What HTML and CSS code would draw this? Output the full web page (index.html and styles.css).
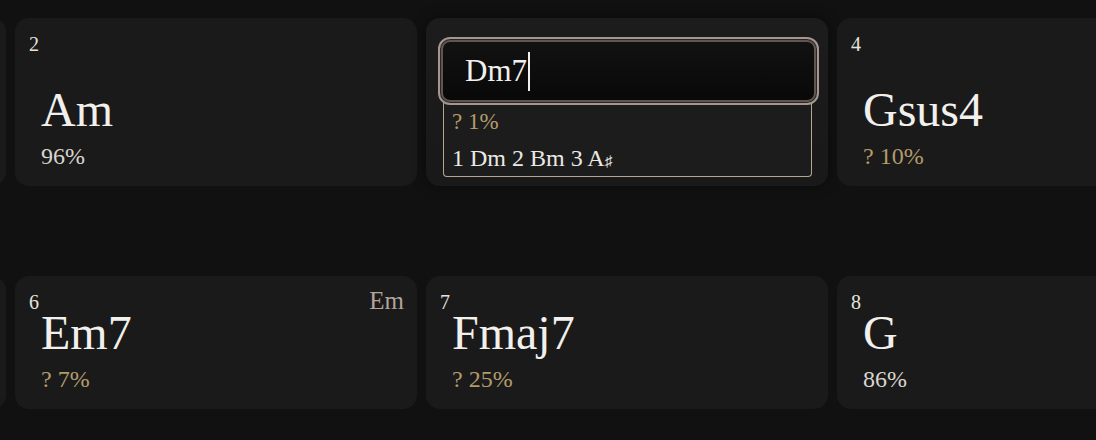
FILE: index.html
```html
<!DOCTYPE html>
<html lang="en">

<head>
    <meta charset="UTF-8">
    <meta name="viewport" content="width=device-width, initial-scale=1.0">
    <title>Chord Sheet</title>
    <link rel="stylesheet" href="styles.css">
</head>

<body>
    <div class="board">
        <!-- row 1 -->
        <div class="card"></div>
        <div class="card">
            <span class="num">2</span>
            <div class="chord">
                <div class="name">Am</div>
                <div class="conf">96%</div>
            </div>
        </div>
        <div class="card editing">
            <div class="chord-input">
                <span class="typed">Dm7</span><span class="caret"></span>
            </div>
            <div class="suggest">
                <div class="conf unsure">? 1%</div>
                <div class="options">1 Dm 2 Bm 3 A<span class="sharp">♯</span></div>
            </div>
        </div>
        <div class="card">
            <span class="num">4</span>
            <div class="chord">
                <div class="name">Gsus4</div>
                <div class="conf unsure">? 10%</div>
            </div>
        </div>

        <!-- row 2 -->
        <div class="card"></div>
        <div class="card">
            <span class="num">6</span>
            <span class="alt">Em</span>
            <div class="chord">
                <div class="name">Em7</div>
                <div class="conf unsure">? 7%</div>
            </div>
        </div>
        <div class="card">
            <span class="num">7</span>
            <div class="chord">
                <div class="name">Fmaj7</div>
                <div class="conf unsure">? 25%</div>
            </div>
        </div>
        <div class="card">
            <span class="num">8</span>
            <div class="chord">
                <div class="name">G</div>
                <div class="conf">86%</div>
            </div>
        </div>
    </div>
</body>

</html>
```

FILE: styles.css
```css
html,
body {
    overflow: hidden;
}

body {
    margin: 0;
    background-color: #111111;
    color: #ece9e4;
    font-family: 'Liberation Serif', 'DejaVu Serif', serif;
}

.board {
    display: grid;
    grid-template-columns: repeat(4, 402px);
    column-gap: 9px;
    row-gap: 90px;
    margin-left: -396px;
    padding-top: 18px;
}

.card {
    position: relative;
    display: flex;
    flex-direction: column;
    min-height: 133px;
    padding: 0 26px 17px;
    box-sizing: border-box;
    background-color: #1a1a1a;
    border-radius: 14px;
}

.num {
    position: absolute;
    top: 15px;
    left: 14px;
    font-size: 20px;
    line-height: 22px;
    color: #e6e3de;
}

.alt {
    position: absolute;
    top: 11px;
    right: 13px;
    font-size: 25px;
    line-height: 28px;
    color: #b3a49c;
}

.chord {
    margin-top: auto;
}

.name {
    font-size: 48px;
    line-height: 50px;
    margin-bottom: 8px;
    color: #f2f0ec;
}

.conf {
    font-size: 24px;
    line-height: 26px;
    color: #d9d5cf;
}

.unsure {
    color: #b39b6b;
}

/* chord being edited */
.editing {
    padding: 19px 9px 9px 12px;
    background: linear-gradient(#1c1c1c, #191919);
    box-shadow: 0 0 14px rgba(0, 0, 0, 0.45);
}

.chord-input {
    position: relative;
    z-index: 1;
    display: flex;
    align-items: center;
    height: 68px;
    padding-left: 25px;
    box-sizing: border-box;
    border: 2px solid #a5978f;
    border-radius: 12px;
    background: linear-gradient(#121212, #080808);
    box-shadow: inset 0 0 0 1px #2b2624, inset 0 0 0 3px #5f5551;
    font-size: 31px;
}

.typed {
    color: #f2f0ec;
}

.caret {
    width: 2px;
    height: 39px;
    margin-left: 1px;
    background-color: #f2f0ec;
}

.suggest {
    margin: -2px 7px 0 5px;
    padding-left: 8px;
    border: 1.5px solid #b5a68f;
    border-top: none;
    border-radius: 0 0 4px 4px;
    background-color: #1c1c1c;
    line-height: 36px;
}

.suggest .conf {
    font-size: 23px;
    line-height: 36px;
    padding-top: 1px;
}

.options {
    font-size: 24px;
    color: #ece9e4;
}

.sharp {
    font-size: 15px;
    line-height: 1;
}
```
